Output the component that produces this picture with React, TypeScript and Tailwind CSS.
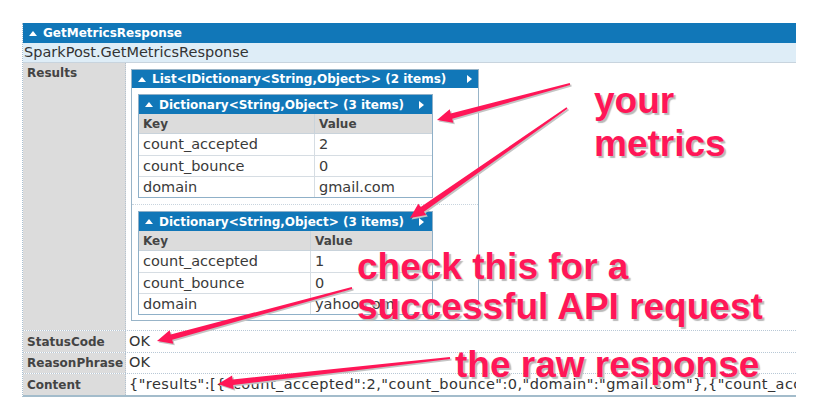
import React from 'react';

const PINK = '#ff1657';

const UpTri = () => (
  <svg width="8" height="5" viewBox="0 0 8 5" className="shrink-0">
    <path d="M0 5 L4 0 L8 5 Z" fill="#fff" />
  </svg>
);

const RightTri = () => (
  <svg width="5" height="8" viewBox="0 0 5 8" className="shrink-0">
    <path d="M0 0 L5 4 L0 8 Z" fill="#fff" />
  </svg>
);

type Row = [string, string];

const Dict: React.FC<{ rows: Row[]; keyW: string }> = ({ rows, keyW }) => (
  <div className="w-[295px] border border-[#8fb0c8]">
    <div className="h-[19px] bg-[#1177b8] flex items-center pl-[6px] pr-[8px] text-white font-bold text-[12px]">
      <UpTri />
      <span className="ml-[6px] flex-1">Dictionary&lt;String,Object&gt; (3 items)</span>
      <RightTri />
    </div>
    <div className="flex h-[20px] bg-[#dcdcdc] border-b border-[#c9d3db] text-[12px] font-bold text-[#444] leading-[20px]">
      <div className={`${keyW} pl-[4px] border-r border-[#c9d3db]`}>Key</div>
      <div className="flex-1 pl-[4px]">Value</div>
    </div>
    {rows.map(([k, v], i) => (
      <div
        key={k}
        className={`flex h-[21px] items-center text-[14.5px] text-[#3a3a3a] ${i > 0 ? 'border-t border-[#d6dde3]' : ''}`}
      >
        <div className={`${keyW} h-full pl-[4px] border-r border-[#d6dde3] leading-[21px]`}>{k}</div>
        <div className="flex-1 h-full pl-[4px] leading-[21px]">{v}</div>
      </div>
    ))}
  </div>
);

function arrowPoints(x1: number, y1: number, x2: number, y2: number) {
  const dx = x2 - x1;
  const dy = y2 - y1;
  const len = Math.hypot(dx, dy);
  const ux = dx / len;
  const uy = dy / len;
  const nx = -uy;
  const ny = ux;
  const head = 15;
  const sx = x2 - ux * head;
  const sy = y2 - uy * head;
  const p = (x: number, y: number, w: number) => `${(x + nx * w).toFixed(1)},${(y + ny * w).toFixed(1)}`;
  return [p(x1, y1, 0.9), p(sx, sy, 2.8), p(sx, sy, 7), `${x2},${y2}`, p(sx, sy, -7), p(sx, sy, -2.8), p(x1, y1, -0.9)].join(' ');
}

const arrows = [
  [570, 84, 437, 120],
  [567, 108, 410, 218],
  [352, 288, 157, 341],
  [450, 358, 218, 384],
];

const note = "absolute font-['Liberation_Sans',Arial,sans-serif] font-bold text-[37px] text-[#ff1657] whitespace-nowrap [text-shadow:2px_2px_1px_#b9b9b9]";

const App: React.FC = () => {
  const cell = "font-['DejaVu_Sans',Verdana,sans-serif]";
  return (
    <div className={`relative w-[820px] h-[415px] bg-white overflow-hidden ${cell}`}>
      <div className="pt-[23px] pl-[22px]">
        <div className="w-[774px] border-l border-dotted border-[#a9bfd0]">
          <div className="h-[20px] bg-[#1177b8] flex items-center pl-[6px] text-white font-bold text-[12px]">
            <UpTri />
            <span className="ml-[6px]">GetMetricsResponse</span>
          </div>
          <div className="h-[20px] bg-[#deedf7] border-b border-[#c8d4de] text-[14.5px] leading-[19px] pl-[1px] text-[#333]">
            SparkPost.GetMetricsResponse
          </div>

          <div className="flex h-[267px]">
            <div className="w-[103px] bg-[#dcdcdc] border-r border-dotted border-[#b3c2cf] pl-[4px] pt-[1px] text-[12px] font-bold text-[#444]">
              Results
            </div>
            <div className="flex-1 pl-[5px] pt-[6px]">
              <div className="w-[348px] border border-[#98b4c8]">
                <div className="h-[18px] bg-[#1177b8] flex items-center pl-[6px] pr-[6px] text-white font-bold text-[12px]">
                  <UpTri />
                  <span className="ml-[6px] flex-1">List&lt;IDictionary&lt;String,Object&gt;&gt; (2 items)</span>
                  <RightTri />
                </div>
                <div className="px-[6px] pt-[6px] pb-[6px] border-b border-dotted border-[#c8d4de]">
                  <Dict
                    keyW="w-[176px]"
                    rows={[
                      ['count_accepted', '2'],
                      ['count_bounce', '0'],
                      ['domain', 'gmail.com'],
                    ]}
                  />
                </div>
                <div className="px-[6px] pt-[6px] pb-[5px]">
                  <Dict
                    keyW="w-[172px]"
                    rows={[
                      ['count_accepted', '1'],
                      ['count_bounce', '0'],
                      ['domain', 'yahoo.com'],
                    ]}
                  />
                </div>
              </div>
            </div>
          </div>

          {[
            ['StatusCode', 'OK', 'h-[22px]', ''],
            ['ReasonPhrase', 'OK', 'h-[21px]', ''],
            ['Content', '{"results":[{"count_accepted":2,"count_bounce":0,"domain":"gmail.com"},{"count_accepted":1,"count_bounce":0,"domain":"yahoo.com"}]}', 'h-[22px]', 'tracking-[0.45px]'],
          ].map(([label, value, h, track]) => (
            <div key={label} className={`flex ${h} border-t border-dotted border-[#b8c8d6]`}>
              <div className="w-[103px] shrink-0 bg-[#dcdcdc] border-r border-dotted border-[#b3c2cf] pl-[4px] text-[12px] font-bold text-[#444] flex items-center">
                {label}
              </div>
              <div className={`flex-1 overflow-hidden whitespace-nowrap pl-[3px] text-[14.5px] text-[#333] flex items-center ${track}`}>
                {value}
              </div>
            </div>
          ))}
          <div className="h-[2px] bg-[#a3bccb]" />
        </div>
      </div>

      <svg className="absolute inset-0" width="820" height="415" viewBox="0 0 820 415">
        {arrows.map(([a, b, c, d], i) => (
          <g key={i}>
            <polygon points={arrowPoints(a + 1.5, b + 1.5, c + 1.5, d + 1.5)} fill="#c4c4c4" />
            <polygon points={arrowPoints(a, b, c, d)} fill={PINK} />
          </g>
        ))}
      </svg>

      <div className={`${note} left-[594px] top-[79px] leading-[43px]`}>
        your
        <br />
        metrics
      </div>
      <div className={`${note} left-[357px] top-[247px] leading-[40px]`}>
        check this for a
        <br />
        successful API request
      </div>
      <div className={`${note} left-[455px] top-[345px] leading-[40px]`}>the raw response</div>
    </div>
  );
};

export default App;
